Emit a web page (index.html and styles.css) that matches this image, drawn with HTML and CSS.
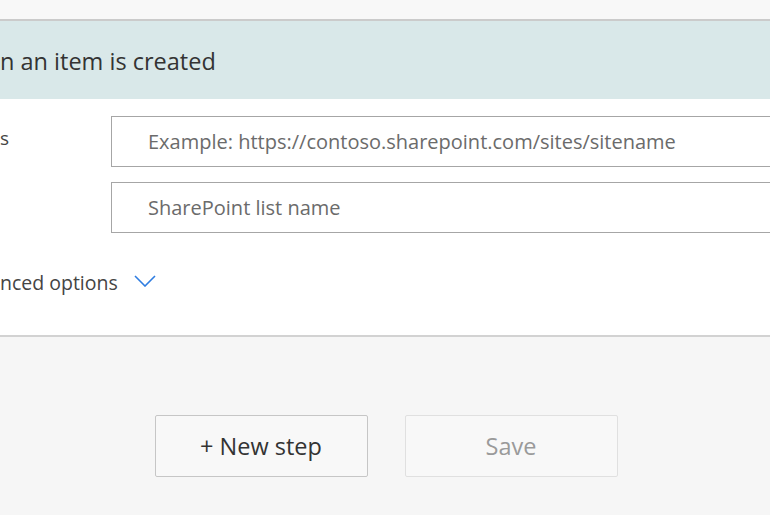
FILE: index.html
```html
<!DOCTYPE html>
<html lang="en">
<head>
<meta charset="utf-8">
<title>When an item is created</title>
<link rel="stylesheet" href="styles.css">
</head>
<body>
<div class="page">
  <div class="top-space"></div>
  <section class="card">
    <header class="card-header">n an item is created</header>
    <div class="card-body">
      <div class="row">
        <label class="label">s</label>
        <div class="input">Example: https://contoso.sharepoint.com/sites/sitename</div>
      </div>
      <div class="row">
        <label class="label"></label>
        <div class="input">SharePoint list name</div>
      </div>
      <div class="advanced">
        <span class="advanced-text">nced options</span>
        <svg class="chevron" width="22" height="12" viewBox="0 0 22 12" aria-hidden="true">
          <polyline points="1,1 11,11 21,1" fill="none" stroke="#2f7de1" stroke-width="1.6"/>
        </svg>
      </div>
    </div>
  </section>
  <div class="actions">
    <button class="btn">+ New step</button>
    <button class="btn btn-disabled">Save</button>
  </div>
</div>
</body>
</html>
```

FILE: styles.css
```css
html, body {
  margin: 0;
  padding: 0;
}
body {
  width: 770px;
  height: 515px;
  overflow: hidden;
  background: #f6f6f6;
  font-family: "Open Sans", "Noto Sans", "Liberation Sans", sans-serif;
  color: #333;
}
.page {
  width: 770px;
  overflow: hidden;
}
.top-space {
  height: 19px;
  background: #f8f8f8;
}
.card {
  width: 820px;
  background: #fff;
  border-top: 2px solid #cbcbcb;
  border-bottom: 2px solid #d2d2d2;
}
.card-header {
  height: 78px;
  background: #d9e8e9;
  display: flex;
  align-items: center;
  font-size: 23.5px;
  color: #333;
  padding-top: 2px;
  box-sizing: border-box;
}
.card-body {
  padding-top: 17px;
  height: 236px;
  box-sizing: border-box;
}
.row {
  display: flex;
  margin-bottom: 15px;
}
.label {
  width: 111px;
  flex: none;
  font-size: 19px;
  color: #444;
  padding-top: 9px;
}
.input {
  flex: 1;
  height: 51px;
  box-sizing: border-box;
  border: 1px solid #a6a6a6;
  display: flex;
  align-items: center;
  padding-left: 36px;
  font-size: 20px;
  color: #6b6b6b;
}
.advanced {
  display: flex;
  align-items: center;
  gap: 16px;
  margin-top: 36px;
}
.advanced-text {
  font-size: 19.5px;
  color: #444;
}
.chevron {
  display: block;
  margin-top: -3px;
}
.actions {
  display: flex;
  justify-content: center;
  gap: 37px;
  padding-top: 78px;
  padding-left: 2px;
}
.btn {
  width: 213px;
  height: 62px;
  border: 1px solid #c6c6c6;
  border-radius: 2px;
  background: #f8f8f8;
  font-family: inherit;
  font-size: 23.5px;
  color: #333;
  padding: 0;
}
.btn-disabled {
  border-color: #e0e0e0;
  color: #9a9a9a;
}
```
